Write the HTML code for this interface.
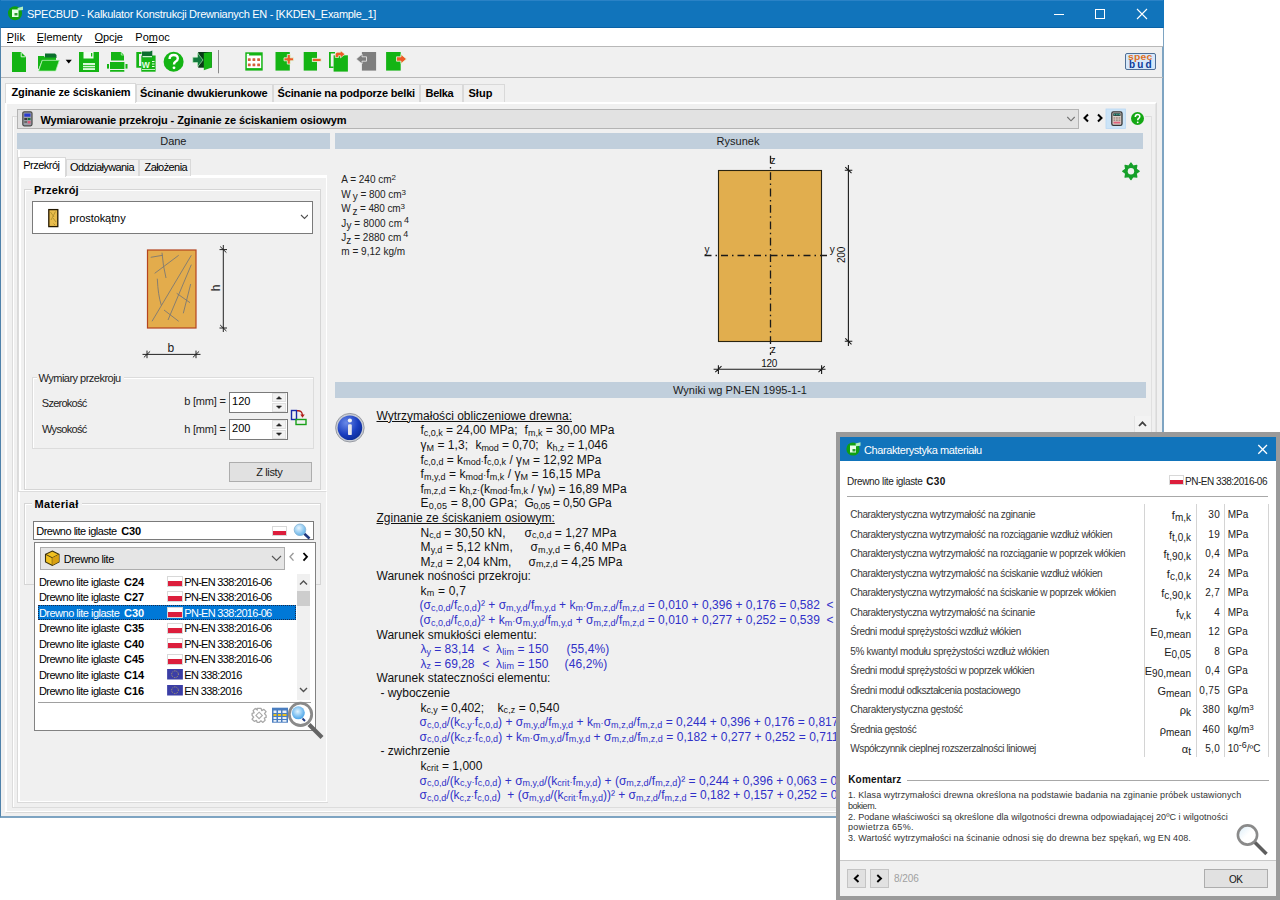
<!DOCTYPE html><html><head><meta charset="utf-8"><style>html,body{margin:0;padding:0;width:1280px;height:900px;overflow:hidden;background:#fff;position:relative;font-family:"Liberation Sans", sans-serif;}sub,sup{line-height:0;}</style></head><body><div style="position:absolute;left:0px;top:0px;width:1164px;height:818px;box-sizing:border-box;border:1px solid #4f82ab;border-right:2px solid #7ea4c2;border-bottom:2px solid #7ea4c2;background:#f0f0f0;"></div>
<div style="position:absolute;left:0px;top:0px;width:1164px;height:28px;background:#1174bb;"></div>
<div style="position:absolute;left:1px;top:0px;width:1162px;height:1px;background:#2a82c6;"></div>
<div style="position:absolute;left:1px;top:27px;width:1162px;height:1px;background:#0a62a6;"></div>
<svg style="position:absolute;left:6px;top:4px" width="20" height="20" viewBox="0 0 20 20"><circle cx="9" cy="9.3" r="7" fill="#10a010"/><rect x="6" y="5.5" width="6.5" height="7.5" fill="#e8ffe8"/><rect x="8.5" y="9" width="3" height="2.5" fill="#30a030"/><path d="M11.5 4 L17 2.5 L17 6 L12 6.5 Z" fill="#b0f0c0"/></svg>
<span style="letter-spacing:-0.293px;position:absolute;top:9px;font-size:11px;line-height:11px;font-weight:400;color:#fff;white-space:pre;left:27.0px;">SPECBUD - Kalkulator Konstrukcji Drewnianych EN - [KKDEN_Example_1]</span>
<div style="position:absolute;left:1054px;top:14px;width:10px;height:1px;background:#fff;"></div>
<div style="position:absolute;left:1095px;top:9px;width:10px;height:10px;box-sizing:border-box;border:1px solid #fff;"></div>
<svg style="position:absolute;left:1136px;top:8px" width="12" height="12" viewBox="0 0 12 12"><path d="M1 1 L11 11 M11 1 L1 11" stroke="#fff" stroke-width="1.1"/></svg>
<div style="position:absolute;left:1px;top:28px;width:1162px;height:18px;background:#fff;"></div>
<div style="position:absolute;left:1px;top:46px;width:1162px;height:1px;background:#b8b8b8;"></div>
<span style="letter-spacing:0.141px;position:absolute;top:32px;font-size:11px;line-height:11px;font-weight:400;color:#000;white-space:pre;left:6.8px;">Plik</span>
<div style="position:absolute;left:7px;top:42px;width:6px;height:1px;background:#000;"></div>
<span style="letter-spacing:-0.070px;position:absolute;top:32px;font-size:11px;line-height:11px;font-weight:400;color:#000;white-space:pre;left:36.8px;">Elementy</span>
<div style="position:absolute;left:37px;top:42px;width:6px;height:1px;background:#000;"></div>
<span style="letter-spacing:-0.070px;position:absolute;top:32px;font-size:11px;line-height:11px;font-weight:400;color:#000;white-space:pre;left:94.5px;">Opcje</span>
<div style="position:absolute;left:95px;top:42px;width:8px;height:1px;background:#000;"></div>
<span style="letter-spacing:0.110px;position:absolute;top:32px;font-size:11px;line-height:11px;font-weight:400;color:#000;white-space:pre;left:135.2px;">Pomoc</span>
<div style="position:absolute;left:148px;top:42px;width:9px;height:1px;background:#000;"></div>
<div style="position:absolute;left:1px;top:77px;width:1162px;height:1px;background:#b8b8b8;"></div>
<svg style="position:absolute;left:0;top:0" width="420" height="80" viewBox="0 0 420 80"><path d="M12 52 H21 L26 57 V72 H12 Z" fill="#14b414"/><path d="M21.2 52.5 V56.8 H25.5" fill="none" stroke="#e8ffe8" stroke-width="0.9"/><path d="M45 53.5 H55 L56.5 55 V58 H45 Z" fill="#0b6e2e"/><path d="M38 56 H44 L45 57.5 H56 V60 H42 L38.5 69 H38 Z" fill="#14b414"/><path d="M42.3 60.3 H59.3 L55.7 71 H38.6 Z" fill="#14b414" stroke="#aef5ae" stroke-width="0.7"/><path d="M65.7 59.8 H71.8 L68.75 63.6 Z" fill="#000"/><path d="M79 52 H99 V72 H79 Z" fill="#14b414"/><rect x="83.5" y="52" width="10" height="6.5" fill="#f0fff0"/><rect x="91" y="53" width="1.3" height="3.5" fill="#14b414"/><rect x="83" y="63" width="12" height="7" fill="#d8f8d8"/><rect x="83" y="65" width="12" height="0.8" fill="#14b414"/><rect x="83" y="67.3" width="12" height="0.8" fill="#14b414"/><path d="M111 52 H121 L124 55 V60.5 H111 Z" fill="#14b414"/><path d="M121.3 52.3 V55 H124" fill="none" stroke="#d8ffd8" stroke-width="0.7"/><rect x="110" y="62" width="14.4" height="7" fill="#14b414"/><rect x="107" y="64" width="2" height="4.6" fill="#14b414"/><rect x="125.5" y="64" width="2" height="4.6" fill="#14b414"/><rect x="110" y="70" width="14.4" height="1.8" rx="0.6" fill="#14b414"/><path d="M136.3 52 H141.5 V54 H139 V66 H141.5 V67.8 H136.3 Z" fill="#14b414"/><rect x="141.3" y="55.5" width="14.3" height="16.2" fill="#14b414"/><path d="M142 51.5 H150 L152.3 50.6 V57.5 H142 Z" fill="#0b6e2e"/><path d="M142.5 56 H152 V57.3 H142.5 Z" fill="#c8f8c8"/><text x="141.8" y="67.8" font-family="Liberation Sans" font-weight="700" font-size="8.5" fill="#e8ffe8">W</text><rect x="152" y="61" width="2.5" height="1" fill="#e8ffe8"/><rect x="152" y="63.5" width="2.5" height="1" fill="#e8ffe8"/><rect x="152" y="66" width="2.5" height="1" fill="#e8ffe8"/><rect x="142" y="69" width="13" height="0.8" fill="#e8ffe8"/><circle cx="173.6" cy="61.7" r="10" fill="#14b414"/><path d="M169.6 59 Q169.6 55 173.7 55 Q177.8 55 177.8 58.6 Q177.8 60.6 175.4 61.8 Q174 62.6 174 64.6" fill="none" stroke="#fff" stroke-width="2.4"/><circle cx="174" cy="67.8" r="1.4" fill="#fff"/><rect x="198.2" y="52" width="13.6" height="15.7" fill="#083c16"/><path d="M203.8 53 L211.8 52 V67.5 L203.8 70.3 Z" fill="#14b414"/><path d="M192.8 57.2 H197.5 V52.8 L203 60 L197.5 67 V62.6 H192.8 Z" fill="#127a3c" stroke="#c8f8c8" stroke-width="0.6"/><rect x="218" y="50" width="1" height="23.3" fill="#8a8a8a"/><rect x="245.3" y="52.3" width="17.4" height="18.3" fill="#14b414"/><rect x="246.8" y="55.5" width="14.4" height="12.6" fill="#fff"/><rect x="246.8" y="53.8" width="2.3" height="2" fill="#fff"/><rect x="247.9" y="58.2" width="2.8" height="2.8" rx="0.5" fill="#d4603c"/><rect x="247.9" y="63.50000000000001" width="2.8" height="2.8" rx="0.5" fill="#d4603c"/><rect x="252.5" y="58.2" width="2.8" height="2.8" rx="0.5" fill="#d4603c"/><rect x="252.5" y="63.50000000000001" width="2.8" height="2.8" rx="0.5" fill="#d4603c"/><rect x="257.20000000000005" y="58.2" width="2.8" height="2.8" rx="0.5" fill="#d4603c"/><rect x="257.20000000000005" y="63.50000000000001" width="2.8" height="2.8" rx="0.5" fill="#d4603c"/><rect x="275.5" y="52" width="14.3" height="18.6" fill="#14b414"/><path d="M287.3 54.5 h3 v3.3 h3.3 v3 h-3.3 v3.3 h-3 v-3.3 h-3.3 v-3 h3.3 Z" fill="#ee5a28" stroke="#e0ffe0" stroke-width="0.8"/><rect x="303.7" y="52" width="13.3" height="18.6" fill="#14b414"/><rect x="312.3" y="58.3" width="8.8" height="3.2" fill="#ee5a28" stroke="#e0ffe0" stroke-width="0.8"/><path d="M329 52 H335 V53.5 H330.8 V66.5 H333.5 V68 H329 Z" fill="#14b414"/><rect x="333.6" y="55.3" width="14.3" height="16.3" fill="#14b414"/><path d="M335.3 57.5 V54.3 Q335.3 52.2 337.5 52.2 H340.5 V50.5 L345 54.2 L340.5 57.9 V55.7 H338.6 V57.5 Z" fill="#ee5a28" stroke="#e0ffe0" stroke-width="0.7"/><rect x="361.9" y="52" width="14.2" height="18.6" fill="#7e7e7e"/><path d="M366.5 56.8 H362 V54 L356.2 59 L362 64 V61.2 H366.5 Z" fill="#7e7e7e" stroke="#f0f0f0" stroke-width="0.8"/><rect x="386.1" y="52" width="14.6" height="18.6" fill="#14b414"/><path d="M396.5 56.8 H401 V54.3 L406.5 59 L401 63.7 V61.2 H396.5 Z" fill="#ee5a28" stroke="#e0ffe0" stroke-width="0.8"/></svg>
<div style="position:absolute;left:1125px;top:53px;width:31px;height:17px;box-sizing:border-box;border:1px solid #4f6f96;border-radius:2px;background:#d6e8fa;overflow:hidden"><div style="position:absolute;left:2px;top:-1px;font-size:9px;line-height:9px;font-weight:700;color:#e0701e;letter-spacing:0.2px;transform:scaleX(1.15);transform-origin:0 0;font-family:'Liberation Sans'">spec</div><div style="position:absolute;left:3px;top:5.5px;font-size:10px;line-height:10px;font-weight:700;color:#0a3a98;letter-spacing:2.2px;font-family:'Liberation Sans'">bud</div></div>
<div style="position:absolute;left:5px;top:102px;width:1152px;height:711px;box-sizing:border-box;border:1px solid #d9d9d9;border-top-color:#fff;border-left-color:#fff;background:#f0f0f0;"></div>
<div style="position:absolute;left:6px;top:103px;width:1150px;height:709px;box-sizing:border-box;border:1px solid #fff;border-right-color:#e3e3e3;"></div>
<div style="position:absolute;left:136px;top:84px;width:137px;height:18px;box-sizing:border-box;border:1px solid #d9d9d9;border-bottom:none;background:#f0f0f0;"></div>
<div style="position:absolute;left:273px;top:84px;width:147px;height:18px;box-sizing:border-box;border:1px solid #d9d9d9;border-bottom:none;background:#f0f0f0;"></div>
<div style="position:absolute;left:420px;top:84px;width:43px;height:18px;box-sizing:border-box;border:1px solid #d9d9d9;border-bottom:none;background:#f0f0f0;"></div>
<div style="position:absolute;left:463px;top:84px;width:42px;height:18px;box-sizing:border-box;border:1px solid #d9d9d9;border-bottom:none;background:#f0f0f0;"></div>
<div style="position:absolute;left:5px;top:83px;width:131px;height:20px;box-sizing:border-box;border:1px solid #d9d9d9;border-bottom:none;background:#fff;"></div>
<span style="letter-spacing:-0.149px;position:absolute;top:87px;font-size:11px;line-height:11px;font-weight:700;color:#000;white-space:pre;left:11.5px;">Zginanie ze ściskaniem</span>
<span style="letter-spacing:-0.160px;position:absolute;top:87.5px;font-size:11px;line-height:11px;font-weight:700;color:#000;white-space:pre;left:140.1px;">Ścinanie dwukierunkowe</span>
<span style="letter-spacing:-0.170px;position:absolute;top:87.5px;font-size:11px;line-height:11px;font-weight:700;color:#000;white-space:pre;left:277.6px;">Ścinanie na podporze belki</span>
<span style="letter-spacing:-0.312px;position:absolute;top:87.5px;font-size:11px;line-height:11px;font-weight:700;color:#000;white-space:pre;left:425.5px;">Belka</span>
<span style="letter-spacing:0.014px;position:absolute;top:87.5px;font-size:11px;line-height:11px;font-weight:700;color:#000;white-space:pre;left:468.5px;">Słup</span>
<div style="position:absolute;left:12px;top:116px;width:1140px;height:692px;box-sizing:border-box;border:1px solid #dcdcdc;border-top:none;"></div>
<div style="position:absolute;left:12px;top:116px;width:5px;height:1px;background:#dcdcdc;"></div>
<div style="position:absolute;left:1145px;top:116px;width:7px;height:1px;background:#dcdcdc;"></div>
<div style="position:absolute;left:13px;top:117px;width:1138px;height:690px;box-sizing:border-box;border:1px solid #fff;border-right:none;border-bottom:none;border-top:none;"></div>
<div style="position:absolute;left:17px;top:109px;width:1062px;height:20px;box-sizing:border-box;border:1px solid #b4b4b4;background:#e2e2e2;"></div>
<span style="letter-spacing:-0.101px;position:absolute;top:115px;font-size:11px;line-height:11px;font-weight:700;color:#000;white-space:pre;left:40.5px;">Wymiarowanie przekroju - Zginanie ze ściskaniem osiowym</span>
<svg style="position:absolute;left:22px;top:111px" width="12" height="16" viewBox="0 0 12 16"><rect x="0.8" y="0.8" width="9.2" height="14" rx="1.5" fill="#9aa0a8" stroke="#4a4a4a" stroke-width="1.2"/><rect x="2.3" y="2.5" width="6.2" height="3.2" fill="#2a3ad0"/><rect x="2.3" y="7" width="2.8" height="2" fill="#3a3a3a"/><rect x="5.7" y="7" width="2.8" height="2" fill="#1a6a3a"/><rect x="2.3" y="10" width="2.8" height="2" fill="#6a6a6a"/><rect x="5.7" y="10" width="2.8" height="2.5" fill="#e05a7a"/></svg>
<svg style="position:absolute;left:1066px;top:114px" width="12" height="10" viewBox="0 0 12 10"><path d="M1.3 3 L5 6.8 L8.7 3" fill="none" stroke="#707070" stroke-width="1.1"/></svg>
<svg style="position:absolute;left:1080px;top:108px" width="70" height="22" viewBox="1080 108 70 22"><path d="M1088 114.5 L1084.5 118 L1088 121.5" fill="none" stroke="#000" stroke-width="2"/><path d="M1098 114.5 L1101.5 118 L1098 121.5" fill="none" stroke="#000" stroke-width="2"/><rect x="1106" y="109" width="19.5" height="19.5" fill="#cce4f7" stroke="#b8d8f4" stroke-width="0.8"/><rect x="1111.8" y="111.8" width="10.2" height="13.6" rx="1.6" fill="#d9cfc8" stroke="#353535" stroke-width="1.3"/><rect x="1113.3" y="113.3" width="7.2" height="2.6" fill="#1a2a28"/><rect x="1113.8" y="113.7" width="1.6" height="1.6" fill="#3aa090"/><rect x="1116.1" y="113.7" width="1.6" height="1.6" fill="#3aa090"/><rect x="1118.4" y="113.7" width="1.6" height="1.6" fill="#3aa090"/><g fill="#9a8078"><rect x="1113.5" y="117.3" width="1.8" height="1.3"/><rect x="1116" y="117.3" width="1.8" height="1.3"/><rect x="1118.5" y="117.3" width="1.8" height="1.3"/><rect x="1113.5" y="119.5" width="1.8" height="1.3"/><rect x="1116" y="119.5" width="1.8" height="1.3"/><rect x="1118.5" y="119.5" width="1.8" height="1.3"/></g><rect x="1113.5" y="121.7" width="6.8" height="1.8" fill="#e0607a"/><circle cx="1137.5" cy="118.5" r="6.5" fill="#14a814"/><path d="M1135.3 117 Q1135.3 114.6 1137.6 114.6 Q1139.8 114.6 1139.8 116.6 Q1139.8 117.8 1138.5 118.5 Q1137.7 119 1137.7 120.3" fill="none" stroke="#fff" stroke-width="1.5"/><circle cx="1137.7" cy="122.3" r="0.9" fill="#fff"/></svg>
<div style="position:absolute;left:17px;top:133px;width:313px;height:16px;background:#c1cfdc;"></div>
<span style="letter-spacing:0.001px;position:absolute;top:136px;font-size:11px;line-height:11px;font-weight:400;color:#1a1a1a;white-space:pre;left:160.2px;">Dane</span>
<div style="position:absolute;left:17px;top:175px;width:311px;height:628px;box-sizing:border-box;border:1px solid #dadada;border-top:none;border-right:none;"></div>
<div style="position:absolute;left:18px;top:176px;width:309px;height:626px;box-sizing:border-box;border:2px solid #fff;border-right:1px solid #fff;border-bottom:1px solid #fff;border-top:none;"></div>
<div style="position:absolute;left:18px;top:175px;width:309px;height:317px;box-sizing:border-box;border:1px solid #dcdcdc;border-top-color:#fff;border-right-color:#fff;background:#f0f0f0;"></div>
<div style="position:absolute;left:19px;top:176px;width:307px;height:315px;box-sizing:border-box;border:2px solid #fff;border-right:none;border-bottom:1px solid #fff;"></div>
<div style="position:absolute;left:66px;top:159px;width:73px;height:17px;box-sizing:border-box;border:1px solid #d9d9d9;border-bottom:none;background:#f0f0f0;"></div>
<div style="position:absolute;left:139px;top:159px;width:52px;height:17px;box-sizing:border-box;border:1px solid #d9d9d9;border-bottom:none;background:#f0f0f0;"></div>
<div style="position:absolute;left:18px;top:157px;width:48px;height:20px;box-sizing:border-box;border:1px solid #d9d9d9;border-bottom:none;background:#fff;"></div>
<span style="letter-spacing:-0.505px;position:absolute;top:159.6px;font-size:11px;line-height:11px;font-weight:400;color:#000;white-space:pre;left:23.2px;">Przekrój</span>
<span style="letter-spacing:-0.588px;position:absolute;top:161.5px;font-size:11px;line-height:11px;font-weight:400;color:#000;white-space:pre;left:70.1px;">Oddziaływania</span>
<span style="letter-spacing:-0.567px;position:absolute;top:161.5px;font-size:11px;line-height:11px;font-weight:400;color:#000;white-space:pre;left:144.5px;">Założenia</span>
<div style="position:absolute;left:24px;top:189px;width:297px;height:301px;box-sizing:border-box;border:1px solid #d5d5d5;"></div>
<div style="position:absolute;left:25px;top:190px;width:295px;height:299px;box-sizing:border-box;border:1px solid #fff;border-right:none;border-bottom:none;"></div>
<div style="position:absolute;left:32px;top:183px;width:48px;height:12px;background:#f0f0f0;"></div>
<span style="letter-spacing:0.172px;position:absolute;top:185px;font-size:11px;line-height:11px;font-weight:700;color:#000;white-space:pre;left:34.0px;">Przekrój</span>
<div style="position:absolute;left:32px;top:201px;width:281px;height:33px;box-sizing:border-box;border:1px solid #7a7a7a;background:#fff;"></div>
<svg style="position:absolute;left:47px;top:208px" width="13" height="20" viewBox="0 0 13 20"><rect x="1.8" y="1.6" width="9" height="17" fill="#e8bc4c" stroke="#241800" stroke-width="1.3"/><path d="M3.5 4 L7 9 M8.5 3.5 L4 12 M6 10 L9 14 M6.5 15.5 L8 17" stroke="#a88a28" stroke-width="0.8" fill="none"/></svg>
<span style="letter-spacing:-0.080px;position:absolute;top:213px;font-size:11px;line-height:11px;font-weight:400;color:#000;white-space:pre;left:69.6px;">prostokątny</span>
<svg style="position:absolute;left:296px;top:211px" width="12" height="10" viewBox="0 0 12 10"><path d="M5 4 L8.5 7.5 L12 4" fill="none" stroke="#505050" stroke-width="1.1"/></svg>
<svg style="position:absolute;left:140px;top:240px" width="100" height="125" viewBox="140 240 100 125"><rect x="147.5" y="250" width="48.5" height="78" fill="#e3ac4c" stroke="#b4441e" stroke-width="1.2"/><g stroke="#767676" stroke-width="0.85" fill="none"><path d="M150.7 257.3 L162.7 255.3"/><path d="M162 252.7 Q163 266 166 278"/><path d="M154.7 273.3 L178.7 255.3"/><path d="M157.3 278.7 Q158 295 161.3 305.3"/><path d="M152 321.3 L191.3 255.3"/><path d="M168 320 L191.3 264.7"/><path d="M164 310 L178.7 321.3"/><path d="M176.7 293.3 L190 302.7"/><path d="M183.3 313.3 L190.7 284"/></g><g stroke="#222" stroke-width="1" fill="none"><path d="M223.3 245 V332"/><path d="M219.5 249.6 H227 M220.2 246.6 L226.4 252.6 M219.5 328 H227 M220.2 325 L226.4 331"/><path d="M142.5 354.4 H200.5"/><path d="M147 350.6 V358.2 M143.9 357.4 L150.1 351.4 M196 350.6 V358.2 M192.9 357.4 L199.1 351.4"/></g></svg>
<span style="position:absolute;top:341.5px;font-size:12px;line-height:12px;font-weight:400;color:#222;white-space:pre;left:167.5px;">b</span>
<div style="position:absolute;left:209px;top:282px;width:14px;height:12px;transform:rotate(-90deg);font-size:12px;line-height:12px;color:#222;text-align:center">h</div>
<div style="position:absolute;left:32px;top:377px;width:282px;height:72px;box-sizing:border-box;border:1px solid #dcdcdc;"></div>
<div style="position:absolute;left:33px;top:378px;width:280px;height:70px;box-sizing:border-box;border:1px solid #fff;border-right:none;border-bottom:none;"></div>
<div style="position:absolute;left:37px;top:372px;width:87px;height:10px;background:#f0f0f0;"></div>
<span style="letter-spacing:-0.517px;position:absolute;top:372.5px;font-size:11px;line-height:11px;font-weight:400;color:#222;white-space:pre;left:38.5px;">Wymiary przekroju</span>
<span style="letter-spacing:-0.740px;position:absolute;top:397.6px;font-size:11px;line-height:11px;font-weight:400;color:#222;white-space:pre;left:41.8px;">Szerokość</span>
<span style="letter-spacing:-0.691px;position:absolute;top:423.7px;font-size:11px;line-height:11px;font-weight:400;color:#222;white-space:pre;left:42.0px;">Wysokość</span>
<span style="letter-spacing:-0.224px;position:absolute;top:396.2px;font-size:11px;line-height:11px;font-weight:400;color:#222;white-space:pre;left:184.3px;">b [mm] =</span>
<span style="letter-spacing:-0.224px;position:absolute;top:423.8px;font-size:11px;line-height:11px;font-weight:400;color:#222;white-space:pre;left:184.3px;">h [mm] =</span>
<div style="position:absolute;left:229px;top:392px;width:59px;height:21px;box-sizing:border-box;border:1px solid #7a7a7a;background:#fff;"></div>
<div style="position:absolute;left:272px;top:393px;width:14px;height:9px;box-sizing:border-box;border:1px solid #e0e0e0;background:#f2f2f2;"></div>
<div style="position:absolute;left:272px;top:403px;width:14px;height:9px;box-sizing:border-box;border:1px solid #e0e0e0;background:#f2f2f2;"></div>
<svg style="position:absolute;left:272px;top:392px" width="14" height="21" viewBox="0 0 14 21"><path d="M4.5 7 L7 4.5 L9.5 7 Z M4.5 14 L7 16.5 L9.5 14 Z" fill="#222" stroke="#222" stroke-width="0.6"/></svg>
<span style="letter-spacing:0.047px;position:absolute;top:396.3px;font-size:11px;line-height:11px;font-weight:400;color:#000;white-space:pre;left:232.0px;">120</span>
<div style="position:absolute;left:229px;top:419px;width:59px;height:21px;box-sizing:border-box;border:1px solid #7a7a7a;background:#fff;"></div>
<div style="position:absolute;left:272px;top:420px;width:14px;height:9px;box-sizing:border-box;border:1px solid #e0e0e0;background:#f2f2f2;"></div>
<div style="position:absolute;left:272px;top:430px;width:14px;height:9px;box-sizing:border-box;border:1px solid #e0e0e0;background:#f2f2f2;"></div>
<svg style="position:absolute;left:272px;top:419px" width="14" height="21" viewBox="0 0 14 21"><path d="M4.5 7 L7 4.5 L9.5 7 Z M4.5 14 L7 16.5 L9.5 14 Z" fill="#222" stroke="#222" stroke-width="0.6"/></svg>
<span style="letter-spacing:0.047px;position:absolute;top:423.3px;font-size:11px;line-height:11px;font-weight:400;color:#000;white-space:pre;left:232.0px;">200</span>
<svg style="position:absolute;left:290px;top:409px" width="19" height="18" viewBox="0 0 19 18"><rect x="1.5" y="1.5" width="5" height="9" fill="none" stroke="#1a2aa8" stroke-width="1.4"/><rect x="6" y="10.5" width="10" height="5" fill="none" stroke="#18a018" stroke-width="1.4"/><path d="M7 1.8 Q12 1 12.5 6.5" fill="none" stroke="#b0201a" stroke-width="1.4"/><path d="M10.3 5.5 L12.5 8.8 L14.7 5.5 Z" fill="#b0201a"/></svg>
<div style="position:absolute;left:229px;top:462px;width:83px;height:20px;box-sizing:border-box;border:1px solid #adadad;background:#e1e1e1;"></div>
<span style="letter-spacing:-0.348px;position:absolute;top:467px;font-size:11px;line-height:11px;font-weight:400;color:#222;white-space:pre;left:256.2px;">Z listy</span>
<div style="position:absolute;left:17px;top:150px;width:1px;height:25px;background:#dadada;"></div>
<div style="position:absolute;left:18px;top:150px;width:2px;height:7px;background:#fff;"></div>
<div style="position:absolute;left:24px;top:503px;width:297px;height:82px;box-sizing:border-box;border:1px solid #d5d5d5;"></div>
<div style="position:absolute;left:25px;top:504px;width:295px;height:80px;box-sizing:border-box;border:1px solid #fff;border-right:none;border-bottom:none;"></div>
<div style="position:absolute;left:32px;top:497px;width:50px;height:12px;background:#f0f0f0;"></div>
<span style="letter-spacing:0.303px;position:absolute;top:498.6px;font-size:11px;line-height:11px;font-weight:700;color:#000;white-space:pre;left:34.5px;">Materiał</span>
<div style="position:absolute;left:33px;top:521px;width:281px;height:19px;box-sizing:border-box;border:1px solid #7a7a7a;background:#fff;"></div>
<span style="letter-spacing:-0.499px;position:absolute;top:525.5px;font-size:11px;line-height:11px;font-weight:400;color:#000;white-space:pre;left:36.2px;">Drewno lite iglaste</span>
<span style="letter-spacing:-0.163px;position:absolute;top:525.5px;font-size:11px;line-height:11px;font-weight:700;color:#000;white-space:pre;left:121.2px;">C30</span>
<div style="position:absolute;left:271.5px;top:525.5px;width:15.5px;height:10px;box-sizing:border-box;border:1px solid #d8d8d8;background:linear-gradient(#fff 0,#fff 45%,#dc1e3c 45%,#dc1e3c 100%)"></div>
<svg style="position:absolute;left:292px;top:523px" width="20" height="17" viewBox="0 0 20 17"><defs><radialGradient id="mg1" cx="0.4" cy="0.35" r="0.7"><stop offset="0" stop-color="#e8f6ff"/><stop offset="1" stop-color="#5aaee8"/></radialGradient></defs><path d="M11.5 10 L17.5 15.5" stroke="#203a80" stroke-width="2.6"/><circle cx="8" cy="6.8" r="5.8" fill="url(#mg1)" stroke="#8ab8d8" stroke-width="0.9"/></svg>
<div style="position:absolute;left:34px;top:542px;width:282px;height:189px;box-sizing:border-box;border:1px solid #828282;background:#fff;"></div>
<div style="position:absolute;left:40px;top:547px;width:245px;height:23px;box-sizing:border-box;border:1px solid #adadad;background:#e5e5e5;"></div>
<svg style="position:absolute;left:44px;top:550px" width="17" height="17" viewBox="0 0 17 17"><path d="M8.3 1 L15 4.3 V12 L8.3 15.5 L1.5 12 V4.3 Z" fill="#f0c020" stroke="#3a3010" stroke-width="1.1"/><path d="M1.8 4.4 L8.3 7.8 L14.8 4.4 M8.3 7.8 V15.2" fill="none" stroke="#3a3010" stroke-width="0.9"/><path d="M8.3 8 L14.8 4.6 V11.8 L8.3 15.2 Z" fill="#d8a010"/></svg>
<span style="letter-spacing:-0.457px;position:absolute;top:553.7px;font-size:11px;line-height:11px;font-weight:400;color:#000;white-space:pre;left:63.8px;">Drewno lite</span>
<svg style="position:absolute;left:270px;top:553px" width="14" height="10" viewBox="0 0 14 10"><path d="M2 3 L6.5 7.5 L11 3" fill="none" stroke="#555" stroke-width="1.1"/></svg>
<svg style="position:absolute;left:286px;top:550px" width="26" height="14" viewBox="0 0 26 14"><path d="M7.5 3 L4 6.8 L7.5 10.6" fill="none" stroke="#9a9a9a" stroke-width="1.4"/><path d="M17.5 3 L21 6.8 L17.5 10.6" fill="none" stroke="#000" stroke-width="1.8"/></svg>
<div style="position:absolute;left:297px;top:574px;width:13px;height:126px;background:#f0f0f0;"></div>
<div style="position:absolute;left:297px;top:591px;width:13px;height:15px;background:#cdcdcd;"></div>
<svg style="position:absolute;left:297px;top:574px" width="13" height="126" viewBox="0 0 13 126"><path d="M3 10.5 L6.5 7 L10 10.5" fill="none" stroke="#505050" stroke-width="1.4"/><path d="M3 114 L6.5 117.5 L10 114" fill="none" stroke="#505050" stroke-width="1.4"/></svg>
<span style="letter-spacing:-0.499px;position:absolute;top:576.5px;font-size:11px;line-height:11px;font-weight:400;color:#000;white-space:pre;left:38.9px;">Drewno lite iglaste</span>
<span style="letter-spacing:-0.129px;position:absolute;top:576.5px;font-size:11px;line-height:11px;font-weight:700;color:#000;white-space:pre;left:124.1px;">C24</span>
<div style="position:absolute;left:166.5px;top:576px;width:16px;height:10.5px;box-sizing:border-box;border:1px solid #d8d8d8;background:linear-gradient(#fff 0,#fff 45%,#dc1e3c 45%,#dc1e3c 100%)"></div>
<span style="letter-spacing:-0.695px;position:absolute;top:576.5px;font-size:11px;line-height:11px;font-weight:400;color:#000;white-space:pre;left:184.25px;">PN-EN 338:2016-06</span>
<span style="letter-spacing:-0.499px;position:absolute;top:592.0px;font-size:11px;line-height:11px;font-weight:400;color:#000;white-space:pre;left:38.9px;">Drewno lite iglaste</span>
<span style="letter-spacing:-0.129px;position:absolute;top:592.0px;font-size:11px;line-height:11px;font-weight:700;color:#000;white-space:pre;left:124.1px;">C27</span>
<div style="position:absolute;left:166.5px;top:591px;width:16px;height:10.5px;box-sizing:border-box;border:1px solid #d8d8d8;background:linear-gradient(#fff 0,#fff 45%,#dc1e3c 45%,#dc1e3c 100%)"></div>
<span style="letter-spacing:-0.695px;position:absolute;top:592.0px;font-size:11px;line-height:11px;font-weight:400;color:#000;white-space:pre;left:184.25px;">PN-EN 338:2016-06</span>
<div style="position:absolute;left:38px;top:605px;width:258px;height:15px;box-sizing:border-box;background:#0078d7;border:1px dotted #1a2a4a;"></div>
<span style="letter-spacing:-0.499px;position:absolute;top:607.5px;font-size:11px;line-height:11px;font-weight:400;color:#fff;white-space:pre;left:38.9px;">Drewno lite iglaste</span>
<span style="letter-spacing:-0.129px;position:absolute;top:607.5px;font-size:11px;line-height:11px;font-weight:700;color:#fff;white-space:pre;left:124.1px;">C30</span>
<div style="position:absolute;left:166.5px;top:607px;width:16px;height:10.5px;box-sizing:border-box;border:1px solid #d8d8d8;background:linear-gradient(#fff 0,#fff 45%,#dc1e3c 45%,#dc1e3c 100%)"></div>
<span style="letter-spacing:-0.695px;position:absolute;top:607.5px;font-size:11px;line-height:11px;font-weight:400;color:#fff;white-space:pre;left:184.25px;">PN-EN 338:2016-06</span>
<span style="letter-spacing:-0.499px;position:absolute;top:623.0px;font-size:11px;line-height:11px;font-weight:400;color:#000;white-space:pre;left:38.9px;">Drewno lite iglaste</span>
<span style="letter-spacing:-0.129px;position:absolute;top:623.0px;font-size:11px;line-height:11px;font-weight:700;color:#000;white-space:pre;left:124.1px;">C35</span>
<div style="position:absolute;left:166.5px;top:623px;width:16px;height:10.5px;box-sizing:border-box;border:1px solid #d8d8d8;background:linear-gradient(#fff 0,#fff 45%,#dc1e3c 45%,#dc1e3c 100%)"></div>
<span style="letter-spacing:-0.695px;position:absolute;top:623.0px;font-size:11px;line-height:11px;font-weight:400;color:#000;white-space:pre;left:184.25px;">PN-EN 338:2016-06</span>
<span style="letter-spacing:-0.499px;position:absolute;top:638.5px;font-size:11px;line-height:11px;font-weight:400;color:#000;white-space:pre;left:38.9px;">Drewno lite iglaste</span>
<span style="letter-spacing:-0.129px;position:absolute;top:638.5px;font-size:11px;line-height:11px;font-weight:700;color:#000;white-space:pre;left:124.1px;">C40</span>
<div style="position:absolute;left:166.5px;top:638px;width:16px;height:10.5px;box-sizing:border-box;border:1px solid #d8d8d8;background:linear-gradient(#fff 0,#fff 45%,#dc1e3c 45%,#dc1e3c 100%)"></div>
<span style="letter-spacing:-0.695px;position:absolute;top:638.5px;font-size:11px;line-height:11px;font-weight:400;color:#000;white-space:pre;left:184.25px;">PN-EN 338:2016-06</span>
<span style="letter-spacing:-0.499px;position:absolute;top:654.0px;font-size:11px;line-height:11px;font-weight:400;color:#000;white-space:pre;left:38.9px;">Drewno lite iglaste</span>
<span style="letter-spacing:-0.129px;position:absolute;top:654.0px;font-size:11px;line-height:11px;font-weight:700;color:#000;white-space:pre;left:124.1px;">C45</span>
<div style="position:absolute;left:166.5px;top:654px;width:16px;height:10.5px;box-sizing:border-box;border:1px solid #d8d8d8;background:linear-gradient(#fff 0,#fff 45%,#dc1e3c 45%,#dc1e3c 100%)"></div>
<span style="letter-spacing:-0.695px;position:absolute;top:654.0px;font-size:11px;line-height:11px;font-weight:400;color:#000;white-space:pre;left:184.25px;">PN-EN 338:2016-06</span>
<span style="letter-spacing:-0.499px;position:absolute;top:669.5px;font-size:11px;line-height:11px;font-weight:400;color:#000;white-space:pre;left:38.9px;">Drewno lite iglaste</span>
<span style="letter-spacing:-0.129px;position:absolute;top:669.5px;font-size:11px;line-height:11px;font-weight:700;color:#000;white-space:pre;left:124.1px;">C14</span>
<svg style="position:absolute;left:166.5px;top:669px" width="16" height="10.5" viewBox="0 0 15 10"><rect x="0" y="0" width="15" height="10" fill="#3b3ea6"/><circle cx="7.5" cy="5" r="3.2" fill="none" stroke="#d8c848" stroke-width="0.7" stroke-dasharray="0.8 0.9"/></svg>
<span style="letter-spacing:-0.611px;position:absolute;top:669.5px;font-size:11px;line-height:11px;font-weight:400;color:#000;white-space:pre;left:184.25px;">EN 338:2016</span>
<span style="letter-spacing:-0.499px;position:absolute;top:685.5px;font-size:11px;line-height:11px;font-weight:400;color:#000;white-space:pre;left:38.9px;">Drewno lite iglaste</span>
<span style="letter-spacing:-0.129px;position:absolute;top:685.5px;font-size:11px;line-height:11px;font-weight:700;color:#000;white-space:pre;left:124.1px;">C16</span>
<svg style="position:absolute;left:166.5px;top:685px" width="16" height="10.5" viewBox="0 0 15 10"><rect x="0" y="0" width="15" height="10" fill="#3b3ea6"/><circle cx="7.5" cy="5" r="3.2" fill="none" stroke="#d8c848" stroke-width="0.7" stroke-dasharray="0.8 0.9"/></svg>
<span style="letter-spacing:-0.611px;position:absolute;top:685.5px;font-size:11px;line-height:11px;font-weight:400;color:#000;white-space:pre;left:184.25px;">EN 338:2016</span>
<div style="position:absolute;left:35px;top:698px;width:262px;height:4px;background:#fff;"></div>
<div style="position:absolute;left:38px;top:702px;width:273px;height:1px;background:#a0a0a0;"></div>
<svg style="position:absolute;left:250px;top:700px" width="80" height="42" viewBox="250 700 80 42"><g transform="translate(259.1 715.4)"><path d="M-2 -7 H2 L2.6 -4.8 L4.8 -6 L7 -3.8 L5.4 -1.8 L7 0 V2 L5.2 2.6 L6 4.8 L3.8 7 L1.8 5.4 L0 7 H-2 L-2.6 5 L-4.8 6 L-7 3.8 L-5.4 1.8 L-7 0 V-2 L-5 -2.6 L-6 -4.8 L-3.8 -7 L-1.8 -5.4 Z" fill="#fff" stroke="#a8a8a8" stroke-width="1.3" stroke-linejoin="round"/><path d="M0 -3.2 L3.2 0 L0 3.2 L-3.2 0 Z" fill="#fff" stroke="#a8a8a8" stroke-width="1.1"/></g><rect x="272" y="707.7" width="16" height="15" fill="#4a7ec0"/><g fill="#e8f0fa"><rect x="273.5" y="710.5" width="3" height="2.5"/><rect x="278" y="710.5" width="3" height="2.5"/><rect x="282.5" y="710.5" width="4" height="2.5"/><rect x="273.5" y="717" width="3" height="2"/><rect x="278" y="717" width="3" height="2"/><rect x="282.5" y="717" width="4" height="2"/><rect x="273.5" y="720" width="3" height="1.8"/><rect x="278" y="720" width="3" height="1.8"/><rect x="282.5" y="720" width="4" height="1.8"/></g><g fill="#e8c020"><rect x="273.5" y="714" width="3" height="2"/><rect x="278" y="714" width="3" height="2"/><rect x="282.5" y="714" width="4" height="2"/></g><defs><radialGradient id="mg2" cx="0.45" cy="0.4" r="0.6"><stop offset="0" stop-color="#e0f4ff"/><stop offset="1" stop-color="#4aa4e8"/></radialGradient></defs><circle cx="300.5" cy="714.3" r="11.2" fill="#fff" fill-opacity="0.6" stroke="#8a8a8a" stroke-width="2.8"/><circle cx="298.3" cy="712.8" r="6.5" fill="url(#mg2)"/><path d="M302.5 718.5 L305 721" stroke="#203a80" stroke-width="2"/><path d="M309 724.5 L322 737.5" stroke="#646464" stroke-width="4.2"/></svg>
<div style="position:absolute;left:1151px;top:116px;width:1px;height:690px;background:#e0e0e0;"></div>
<div style="position:absolute;left:335px;top:133px;width:808px;height:16px;background:#c1cfdc;"></div>
<span style="letter-spacing:0.029px;position:absolute;top:136px;font-size:11px;line-height:11px;font-weight:400;color:#1a1a1a;white-space:pre;left:716.5px;">Rysunek</span>
<span style="letter-spacing:-0.006px;position:absolute;top:175.1px;font-size:10px;line-height:10px;font-weight:400;color:#222;white-space:pre;left:341.3px;">A = 240 cm<span style="position:relative;top:-3px;font-size:8px">2</span></span>
<span style="letter-spacing:-0.033px;position:absolute;top:189.8px;font-size:10px;line-height:10px;font-weight:400;color:#222;white-space:pre;left:341.3px;">W<span style="position:relative;top:2.5px">&thinsp;y</span> = 800 cm<span style="position:relative;top:-3px;font-size:8px">3</span></span>
<span style="letter-spacing:-0.125px;position:absolute;top:204.4px;font-size:10px;line-height:10px;font-weight:400;color:#222;white-space:pre;left:341.3px;">W<span style="position:relative;top:2.5px">&thinsp;z</span> = 480 cm<span style="position:relative;top:-3px;font-size:8px">3</span></span>
<span style="letter-spacing:0.087px;position:absolute;top:218.5px;font-size:10px;line-height:10px;font-weight:400;color:#222;white-space:pre;left:341.3px;">J<span style="position:relative;top:2.5px">y</span> = 8000 cm<span style="position:relative;top:-4px;font-size:9px">&thinsp;4</span></span>
<span style="letter-spacing:0.030px;position:absolute;top:233.1px;font-size:10px;line-height:10px;font-weight:400;color:#222;white-space:pre;left:341.3px;">J<span style="position:relative;top:2.5px">z</span> = 2880 cm<span style="position:relative;top:-4px;font-size:9px">&thinsp;4</span></span>
<span style="letter-spacing:0.020px;position:absolute;top:247.2px;font-size:10px;line-height:10px;font-weight:400;color:#222;white-space:pre;left:341.3px;">m = 9,12 kg/m</span>
<svg style="position:absolute;left:690px;top:150px" width="180" height="230" viewBox="690 150 180 230"><rect x="718.5" y="170.5" width="103" height="171" fill="#e1ae4e" stroke="#2a2410" stroke-width="1.1"/><g stroke="#1a1a1a" stroke-width="1.1" fill="none"><path d="M770.5 155.8 V355" stroke-dasharray="7.8 3.5 1.5 3.6" stroke-width="1.3"/><path d="M704.5 255.5 H828" stroke-dasharray="7 4 1.5 4" stroke-width="1.3"/><path d="M848.4 165 V346"/><path d="M844.8 170.2 H852.3 M845.3 167.2 L851.5 173.2 M844.8 341.3 H852.3 M845.3 338.3 L851.5 344.3"/><path d="M713.6 369.2 H825.5"/><path d="M718.4 365.3 V373.9 M715.3 372.2 L721.5 366.2 M821.6 365.3 V373.9 M818.5 372.2 L824.7 366.2"/></g></svg>
<span style="position:absolute;top:155.7px;font-size:10px;line-height:10px;font-weight:400;color:#111;white-space:pre;left:770.5px;">z</span>
<span style="position:absolute;top:345px;font-size:10px;line-height:10px;font-weight:400;color:#111;white-space:pre;left:770.7px;">z</span>
<span style="position:absolute;top:245.2px;font-size:10px;line-height:10px;font-weight:400;color:#111;white-space:pre;left:704.5px;">y</span>
<span style="position:absolute;top:245.2px;font-size:10px;line-height:10px;font-weight:400;color:#111;white-space:pre;left:829.8px;">y</span>
<span style="letter-spacing:-0.229px;position:absolute;top:359px;font-size:10px;line-height:10px;font-weight:400;color:#111;white-space:pre;left:761.2px;">120</span>
<div style="position:absolute;left:831px;top:250px;width:22px;height:10px;transform:rotate(-90deg);font-size:10px;line-height:10px;color:#111;text-align:center;letter-spacing:-0.2px">200</div>
<svg style="position:absolute;left:1118px;top:158px" width="26" height="26" viewBox="1118 158 26 26"><polygon points="1130.95,163.10 1133.09,166.13 1136.75,165.50 1136.12,169.16 1139.15,171.30 1136.12,173.44 1136.75,177.10 1133.09,176.47 1130.95,179.50 1128.81,176.47 1125.15,177.10 1125.78,173.44 1122.75,171.30 1125.78,169.16 1125.15,165.50 1128.81,166.13" fill="#16a02a" stroke="#16a02a" stroke-width="1.4" stroke-linejoin="round"/><circle cx="1130.95" cy="171.3" r="3.2" fill="#f0f0f0"/></svg>
<div style="position:absolute;left:335px;top:382px;width:811px;height:16px;background:#c1cfdc;"></div>
<span style="letter-spacing:0.009px;position:absolute;top:385px;font-size:11px;line-height:11px;font-weight:400;color:#1a1a1a;white-space:pre;left:673.0px;">Wyniki wg PN-EN 1995-1-1</span>
<div style="position:absolute;left:1134px;top:416px;width:17px;height:391px;box-sizing:border-box;background:#f3f3f3;border-left:1px solid #e4e4e4;"></div>
<svg style="position:absolute;left:1134px;top:415px" width="17" height="16" viewBox="0 0 17 16"><path d="M5 11 L8.5 7.3 L12 11" fill="none" stroke="#404040" stroke-width="1.8"/></svg>
<svg style="position:absolute;left:333px;top:411px" width="34" height="34" viewBox="0 0 34 34"><defs><radialGradient id="ig" cx="0.35" cy="0.3" r="0.8"><stop offset="0" stop-color="#6a8ae8"/><stop offset="0.6" stop-color="#1a3ec0"/><stop offset="1" stop-color="#0a2a90"/></radialGradient></defs><circle cx="16.9" cy="16.7" r="14.3" fill="#c8ccd4" stroke="#8a8e96" stroke-width="0.8"/><circle cx="16.9" cy="16.7" r="12.3" fill="url(#ig)"/><circle cx="16.9" cy="9.5" r="2.1" fill="#f4f4f4"/><rect x="15" y="13.3" width="3.8" height="10.8" rx="1.2" fill="#e8e8ec"/></svg>
<span style="letter-spacing:0.006px;position:absolute;top:409.5px;font-size:12px;line-height:12px;font-weight:400;color:#111;white-space:pre;left:376.5px;text-decoration:underline;text-underline-offset:1px;">Wytrzymałości obliczeniowe drewna:</span>
<span style="letter-spacing:-0.021px;position:absolute;top:424.0px;font-size:12px;line-height:12px;font-weight:400;color:#111;white-space:pre;left:420.5px;">f<span style="font-size:9px;position:relative;top:1.5px">c,0,k</span> = 24,00 MPa;</span>
<span style="letter-spacing:0.027px;position:absolute;top:424.0px;font-size:12px;line-height:12px;font-weight:400;color:#111;white-space:pre;left:524.5px;">f<span style="font-size:9px;position:relative;top:1.5px">m,k</span> = 30,00 MPa</span>
<span style="letter-spacing:0.033px;position:absolute;top:439.0px;font-size:12px;line-height:12px;font-weight:400;color:#111;white-space:pre;left:420.5px;">γ<span style="font-size:9px;position:relative;top:1.5px">M</span> = 1,3;</span>
<span style="letter-spacing:-0.074px;position:absolute;top:439.0px;font-size:12px;line-height:12px;font-weight:400;color:#111;white-space:pre;left:475.5px;">k<span style="font-size:9px;position:relative;top:1.5px">mod</span> = 0,70;</span>
<span style="letter-spacing:-0.061px;position:absolute;top:439.0px;font-size:12px;line-height:12px;font-weight:400;color:#111;white-space:pre;left:546.5px;">k<span style="font-size:9px;position:relative;top:1.5px">h,z</span> = 1,046</span>
<span style="letter-spacing:0.009px;position:absolute;top:453.5px;font-size:12px;line-height:12px;font-weight:400;color:#111;white-space:pre;left:420.5px;">f<span style="font-size:9px;position:relative;top:1.5px">c,0,d</span> = k<span style="font-size:9px;position:relative;top:1.5px">mod</span><span style="font-size:9px">·</span>f<span style="font-size:9px;position:relative;top:1.5px">c,0,k</span> / γ<span style="font-size:9px;position:relative;top:1.5px">M</span> = 12,92 MPa</span>
<span style="letter-spacing:0.058px;position:absolute;top:468.0px;font-size:12px;line-height:12px;font-weight:400;color:#111;white-space:pre;left:420.5px;">f<span style="font-size:9px;position:relative;top:1.5px">m,y,d</span> = k<span style="font-size:9px;position:relative;top:1.5px">mod</span><span style="font-size:9px">·</span>f<span style="font-size:9px;position:relative;top:1.5px">m,k</span> / γ<span style="font-size:9px;position:relative;top:1.5px">M</span> = 16,15 MPa</span>
<span style="letter-spacing:-0.039px;position:absolute;top:482.5px;font-size:12px;line-height:12px;font-weight:400;color:#111;white-space:pre;left:420.5px;">f<span style="font-size:9px;position:relative;top:1.5px">m,z,d</span> = k<span style="font-size:9px;position:relative;top:1.5px">h,z</span><span style="font-size:9px">·</span>(k<span style="font-size:9px;position:relative;top:1.5px">mod</span><span style="font-size:9px">·</span>f<span style="font-size:9px;position:relative;top:1.5px">m,k</span> / γ<span style="font-size:9px;position:relative;top:1.5px">M</span>) = 16,89 MPa</span>
<span style="letter-spacing:0.220px;position:absolute;top:497.0px;font-size:12px;line-height:12px;font-weight:400;color:#111;white-space:pre;left:420.5px;">E<span style="font-size:9px;position:relative;top:1.5px">0,05</span> = 8,00 GPa;</span>
<span style="letter-spacing:-0.267px;position:absolute;top:497.0px;font-size:12px;line-height:12px;font-weight:400;color:#111;white-space:pre;left:524.5px;">G<span style="font-size:9px;position:relative;top:1.5px">0,05</span> = 0,50 GPa</span>
<span style="letter-spacing:0.007px;position:absolute;top:511.5px;font-size:12px;line-height:12px;font-weight:400;color:#111;white-space:pre;left:376.5px;text-decoration:underline;text-underline-offset:1px;">Zginanie ze ściskaniem osiowym:</span>
<span style="letter-spacing:-0.046px;position:absolute;top:526.5px;font-size:12px;line-height:12px;font-weight:400;color:#111;white-space:pre;left:420.5px;">N<span style="font-size:9px;position:relative;top:1.5px">c,d</span> = 30,50 kN,</span>
<span style="letter-spacing:0.002px;position:absolute;top:526.5px;font-size:12px;line-height:12px;font-weight:400;color:#111;white-space:pre;left:524.5px;">σ<span style="font-size:9px;position:relative;top:1.5px">c,0,d</span> = 1,27 MPa</span>
<span style="letter-spacing:0.174px;position:absolute;top:541.0px;font-size:12px;line-height:12px;font-weight:400;color:#111;white-space:pre;left:420.5px;">M<span style="font-size:9px;position:relative;top:1.5px">y,d</span> = 5,12 kNm,</span>
<span style="letter-spacing:0.130px;position:absolute;top:541.0px;font-size:12px;line-height:12px;font-weight:400;color:#111;white-space:pre;left:530.5px;">σ<span style="font-size:9px;position:relative;top:1.5px">m,y,d</span> = 6,40 MPa</span>
<span style="letter-spacing:0.038px;position:absolute;top:555.5px;font-size:12px;line-height:12px;font-weight:400;color:#111;white-space:pre;left:420.5px;">M<span style="font-size:9px;position:relative;top:1.5px">z,d</span> = 2,04 kNm,</span>
<span style="letter-spacing:-0.028px;position:absolute;top:555.5px;font-size:12px;line-height:12px;font-weight:400;color:#111;white-space:pre;left:528.5px;">σ<span style="font-size:9px;position:relative;top:1.5px">m,z,d</span> = 4,25 MPa</span>
<span style="letter-spacing:0.004px;position:absolute;top:570.0px;font-size:12px;line-height:12px;font-weight:400;color:#111;white-space:pre;left:376.5px;">Warunek nośności przekroju:</span>
<span style="letter-spacing:0.205px;position:absolute;top:584.5px;font-size:12px;line-height:12px;font-weight:400;color:#111;white-space:pre;left:420.5px;">k<span style="font-size:9px;position:relative;top:1.5px">m</span> = 0,7</span>
<span style="letter-spacing:0.019px;position:absolute;top:599.0px;font-size:12px;line-height:12px;font-weight:400;color:#3030c8;white-space:pre;left:419.5px;">(σ<span style="font-size:9px;position:relative;top:1.5px">c,0,d</span>/f<span style="font-size:9px;position:relative;top:1.5px">c,0,d</span>)² + σ<span style="font-size:9px;position:relative;top:1.5px">m,y,d</span>/f<span style="font-size:9px;position:relative;top:1.5px">m,y,d</span> + k<span style="font-size:9px;position:relative;top:1.5px">m</span><span style="font-size:9px">·</span>σ<span style="font-size:9px;position:relative;top:1.5px">m,z,d</span>/f<span style="font-size:9px;position:relative;top:1.5px">m,z,d</span> = 0,010 + 0,396 + 0,176 = 0,582  &lt;</span>
<span style="letter-spacing:0.019px;position:absolute;top:614.0px;font-size:12px;line-height:12px;font-weight:400;color:#3030c8;white-space:pre;left:419.5px;">(σ<span style="font-size:9px;position:relative;top:1.5px">c,0,d</span>/f<span style="font-size:9px;position:relative;top:1.5px">c,0,d</span>)² + k<span style="font-size:9px;position:relative;top:1.5px">m</span><span style="font-size:9px">·</span>σ<span style="font-size:9px;position:relative;top:1.5px">m,y,d</span>/f<span style="font-size:9px;position:relative;top:1.5px">m,y,d</span> + σ<span style="font-size:9px;position:relative;top:1.5px">m,z,d</span>/f<span style="font-size:9px;position:relative;top:1.5px">m,z,d</span> = 0,010 + 0,277 + 0,252 = 0,539  &lt;</span>
<span style="letter-spacing:0.029px;position:absolute;top:628.5px;font-size:12px;line-height:12px;font-weight:400;color:#111;white-space:pre;left:376.5px;">Warunek smukłości elementu:</span>
<span style="letter-spacing:-0.022px;position:absolute;top:643.0px;font-size:12px;line-height:12px;font-weight:400;color:#3030c8;white-space:pre;left:420.5px;">λ<span style="font-size:9px;position:relative;top:1.5px">y</span> = 83,14</span>
<span style="position:absolute;top:643.0px;font-size:12px;line-height:12px;font-weight:400;color:#3030c8;white-space:pre;left:482.5px;">&lt;</span>
<span style="letter-spacing:0.130px;position:absolute;top:643.0px;font-size:12px;line-height:12px;font-weight:400;color:#3030c8;white-space:pre;left:496.0px;">λ<span style="font-size:9px;position:relative;top:1.5px">lim</span> = 150</span>
<span style="letter-spacing:0.138px;position:absolute;top:643.0px;font-size:12px;line-height:12px;font-weight:400;color:#3030c8;white-space:pre;left:566.5px;">(55,4%)</span>
<span style="letter-spacing:-0.022px;position:absolute;top:657.5px;font-size:12px;line-height:12px;font-weight:400;color:#3030c8;white-space:pre;left:420.5px;">λ<span style="font-size:9px;position:relative;top:1.5px">z</span> = 69,28</span>
<span style="position:absolute;top:657.5px;font-size:12px;line-height:12px;font-weight:400;color:#3030c8;white-space:pre;left:482.5px;">&lt;</span>
<span style="letter-spacing:0.130px;position:absolute;top:657.5px;font-size:12px;line-height:12px;font-weight:400;color:#3030c8;white-space:pre;left:496.0px;">λ<span style="font-size:9px;position:relative;top:1.5px">lim</span> = 150</span>
<span style="letter-spacing:0.138px;position:absolute;top:657.5px;font-size:12px;line-height:12px;font-weight:400;color:#3030c8;white-space:pre;left:564.5px;">(46,2%)</span>
<span style="letter-spacing:0.034px;position:absolute;top:672.0px;font-size:12px;line-height:12px;font-weight:400;color:#111;white-space:pre;left:376.5px;">Warunek stateczności elementu:</span>
<span style="letter-spacing:-0.044px;position:absolute;top:687.0px;font-size:12px;line-height:12px;font-weight:400;color:#111;white-space:pre;left:380.5px;">- wyboczenie</span>
<span style="letter-spacing:-0.089px;position:absolute;top:701.5px;font-size:12px;line-height:12px;font-weight:400;color:#111;white-space:pre;left:420.5px;">k<span style="font-size:9px;position:relative;top:1.5px">c,y</span> = 0,402;</span>
<span style="letter-spacing:0.064px;position:absolute;top:701.5px;font-size:12px;line-height:12px;font-weight:400;color:#111;white-space:pre;left:497.5px;">k<span style="font-size:9px;position:relative;top:1.5px">c,z</span> = 0,540</span>
<span style="letter-spacing:0.044px;position:absolute;top:716.0px;font-size:12px;line-height:12px;font-weight:400;color:#3030c8;white-space:pre;left:419.5px;">σ<span style="font-size:9px;position:relative;top:1.5px">c,0,d</span>/(k<span style="font-size:9px;position:relative;top:1.5px">c,y</span><span style="font-size:9px">·</span>f<span style="font-size:9px;position:relative;top:1.5px">c,0,d</span>) + σ<span style="font-size:9px;position:relative;top:1.5px">m,y,d</span>/f<span style="font-size:9px;position:relative;top:1.5px">m,y,d</span> + k<span style="font-size:9px;position:relative;top:1.5px">m</span><span style="font-size:9px">·</span>σ<span style="font-size:9px;position:relative;top:1.5px">m,z,d</span>/f<span style="font-size:9px;position:relative;top:1.5px">m,z,d</span> = 0,244 + 0,396 + 0,176 = 0,817</span>
<span style="letter-spacing:0.054px;position:absolute;top:730.5px;font-size:12px;line-height:12px;font-weight:400;color:#3030c8;white-space:pre;left:419.5px;">σ<span style="font-size:9px;position:relative;top:1.5px">c,0,d</span>/(k<span style="font-size:9px;position:relative;top:1.5px">c,z</span><span style="font-size:9px">·</span>f<span style="font-size:9px;position:relative;top:1.5px">c,0,d</span>) + k<span style="font-size:9px;position:relative;top:1.5px">m</span><span style="font-size:9px">·</span>σ<span style="font-size:9px;position:relative;top:1.5px">m,y,d</span>/f<span style="font-size:9px;position:relative;top:1.5px">m,y,d</span> + σ<span style="font-size:9px;position:relative;top:1.5px">m,z,d</span>/f<span style="font-size:9px;position:relative;top:1.5px">m,z,d</span> = 0,182 + 0,277 + 0,252 = 0,711</span>
<span style="letter-spacing:-0.041px;position:absolute;top:745.0px;font-size:12px;line-height:12px;font-weight:400;color:#111;white-space:pre;left:380.5px;">- zwichrzenie</span>
<span style="letter-spacing:0.022px;position:absolute;top:759.5px;font-size:12px;line-height:12px;font-weight:400;color:#111;white-space:pre;left:420.5px;">k<span style="font-size:9px;position:relative;top:1.5px">crit</span> = 1,000</span>
<span style="letter-spacing:0.014px;position:absolute;top:774.5px;font-size:12px;line-height:12px;font-weight:400;color:#3030c8;white-space:pre;left:419.5px;">σ<span style="font-size:9px;position:relative;top:1.5px">c,0,d</span>/(k<span style="font-size:9px;position:relative;top:1.5px">c,y</span><span style="font-size:9px">·</span>f<span style="font-size:9px;position:relative;top:1.5px">c,0,d</span>) + σ<span style="font-size:9px;position:relative;top:1.5px">m,y,d</span>/(k<span style="font-size:9px;position:relative;top:1.5px">crit</span><span style="font-size:9px">·</span>f<span style="font-size:9px;position:relative;top:1.5px">m,y,d</span>) + (σ<span style="font-size:9px;position:relative;top:1.5px">m,z,d</span>/f<span style="font-size:9px;position:relative;top:1.5px">m,z,d</span>)² = 0,244 + 0,396 + 0,063 = 0,703</span>
<span style="letter-spacing:-0.021px;position:absolute;top:789.0px;font-size:12px;line-height:12px;font-weight:400;color:#3030c8;white-space:pre;left:419.5px;">σ<span style="font-size:9px;position:relative;top:1.5px">c,0,d</span>/(k<span style="font-size:9px;position:relative;top:1.5px">c,z</span><span style="font-size:9px">·</span>f<span style="font-size:9px;position:relative;top:1.5px">c,0,d</span>)  + (σ<span style="font-size:9px;position:relative;top:1.5px">m,y,d</span>/(k<span style="font-size:9px;position:relative;top:1.5px">crit</span><span style="font-size:9px">·</span>f<span style="font-size:9px;position:relative;top:1.5px">m,y,d</span>))² + σ<span style="font-size:9px;position:relative;top:1.5px">m,z,d</span>/f<span style="font-size:9px;position:relative;top:1.5px">m,z,d</span> = 0,182 + 0,157 + 0,252 = 0,591</span>
<div style="position:absolute;left:836px;top:432px;width:444px;height:468px;background:#9a9a9a;"></div>
<div style="position:absolute;left:840px;top:437px;width:436px;height:459px;background:#fff;"></div>
<div style="position:absolute;left:840px;top:437px;width:436px;height:24px;background:#1174bb;"></div>
<svg style="position:absolute;left:845px;top:440px" width="18" height="18" viewBox="0 0 18 18"><circle cx="8" cy="9" r="6.6" fill="#10a010"/><rect x="5" y="5.5" width="6" height="7" fill="#e8ffe8"/><rect x="7.5" y="9" width="3" height="2.5" fill="#30a030"/><path d="M10.5 3.5 L15.5 2.3 L15.5 5.8 L11 6.2 Z" fill="#b0f0c0"/></svg>
<span style="letter-spacing:-0.403px;position:absolute;top:445px;font-size:11px;line-height:11px;font-weight:400;color:#fff;white-space:pre;left:864.0px;">Charakterystyka materiału</span>
<svg style="position:absolute;left:1256px;top:443px" width="14" height="14" viewBox="0 0 14 14"><path d="M2.3 2 L11 10.8 M11 2 L2.3 10.8" stroke="#fff" stroke-width="1.3"/></svg>
<span style="letter-spacing:-0.333px;position:absolute;top:477px;font-size:10px;line-height:10px;font-weight:400;color:#222;white-space:pre;left:847.1px;">Drewno lite iglaste</span>
<span style="letter-spacing:0.414px;position:absolute;top:477px;font-size:10px;line-height:10px;font-weight:700;color:#111;white-space:pre;left:926.2px;">C30</span>
<div style="position:absolute;left:1168.7px;top:475px;width:15px;height:10px;box-sizing:border-box;border:1px solid #d8d8d8;background:linear-gradient(#fff 0,#fff 45%,#dc1e3c 45%,#dc1e3c 100%)"></div>
<span style="letter-spacing:-0.474px;position:absolute;top:477px;font-size:10px;line-height:10px;font-weight:400;color:#222;white-space:pre;left:1185.0px;">PN-EN 338:2016-06</span>
<div style="position:absolute;left:847px;top:496px;width:421px;height:1px;background:#a8a8a8;"></div>
<div style="position:absolute;left:1144px;top:504px;width:1px;height:253px;background:#d4d4d4;"></div>
<div style="position:absolute;left:1196px;top:504px;width:1px;height:253px;background:#d4d4d4;"></div>
<div style="position:absolute;left:1224px;top:504px;width:1px;height:253px;background:#d4d4d4;"></div>
<div style="position:absolute;left:1268px;top:504px;width:1px;height:253px;background:#d4d4d4;"></div>
<span style="letter-spacing:-0.346px;position:absolute;top:510.0px;font-size:10px;line-height:10px;font-weight:400;color:#3a3a3a;white-space:pre;left:850.3px;">Charakterystyczna wytrzymałość na zginanie</span>
<span style="position:absolute;top:510.0px;font-size:11px;line-height:11px;font-weight:400;color:#222;white-space:pre;right:89px;">f<span style="position:relative;top:2px;font-size:10px">m,k</span></span>
<span style="position:absolute;top:510.0px;font-size:10px;line-height:10px;font-weight:400;color:#222;white-space:pre;right:60px;letter-spacing:0.3px;">30</span>
<span style="position:absolute;top:510.0px;font-size:10px;line-height:10px;font-weight:400;color:#222;white-space:pre;left:1227.7px;">MPa</span>
<span style="letter-spacing:-0.348px;position:absolute;top:529.5px;font-size:10px;line-height:10px;font-weight:400;color:#3a3a3a;white-space:pre;left:850.3px;">Charakterystyczna wytrzymałość na rozciąganie wzdłuż włókien</span>
<span style="position:absolute;top:529.5px;font-size:11px;line-height:11px;font-weight:400;color:#222;white-space:pre;right:89px;">f<span style="position:relative;top:2px;font-size:10px">t,0,k</span></span>
<span style="position:absolute;top:529.5px;font-size:10px;line-height:10px;font-weight:400;color:#222;white-space:pre;right:60px;letter-spacing:0.3px;">19</span>
<span style="position:absolute;top:529.5px;font-size:10px;line-height:10px;font-weight:400;color:#222;white-space:pre;left:1227.7px;">MPa</span>
<span style="letter-spacing:-0.364px;position:absolute;top:549.0px;font-size:10px;line-height:10px;font-weight:400;color:#3a3a3a;white-space:pre;left:850.3px;">Charakterystyczna wytrzymałość na rozciąganie w poprzek włókien</span>
<span style="position:absolute;top:549.0px;font-size:11px;line-height:11px;font-weight:400;color:#222;white-space:pre;right:89px;">f<span style="position:relative;top:2px;font-size:10px">t,90,k</span></span>
<span style="position:absolute;top:549.0px;font-size:10px;line-height:10px;font-weight:400;color:#222;white-space:pre;right:60px;letter-spacing:0.3px;">0,4</span>
<span style="position:absolute;top:549.0px;font-size:10px;line-height:10px;font-weight:400;color:#222;white-space:pre;left:1227.7px;">MPa</span>
<span style="letter-spacing:-0.360px;position:absolute;top:568.5px;font-size:10px;line-height:10px;font-weight:400;color:#3a3a3a;white-space:pre;left:850.3px;">Charakterystyczna wytrzymałość na ściskanie wzdłuż włókien</span>
<span style="position:absolute;top:568.5px;font-size:11px;line-height:11px;font-weight:400;color:#222;white-space:pre;right:89px;">f<span style="position:relative;top:2px;font-size:10px">c,0,k</span></span>
<span style="position:absolute;top:568.5px;font-size:10px;line-height:10px;font-weight:400;color:#222;white-space:pre;right:60px;letter-spacing:0.3px;">24</span>
<span style="position:absolute;top:568.5px;font-size:10px;line-height:10px;font-weight:400;color:#222;white-space:pre;left:1227.7px;">MPa</span>
<span style="letter-spacing:-0.369px;position:absolute;top:588.0px;font-size:10px;line-height:10px;font-weight:400;color:#3a3a3a;white-space:pre;left:850.3px;">Charakterystyczna wytrzymałość na ściskanie w poprzek włókien</span>
<span style="position:absolute;top:588.0px;font-size:11px;line-height:11px;font-weight:400;color:#222;white-space:pre;right:89px;">f<span style="position:relative;top:2px;font-size:10px">c,90,k</span></span>
<span style="position:absolute;top:588.0px;font-size:10px;line-height:10px;font-weight:400;color:#222;white-space:pre;right:60px;letter-spacing:0.3px;">2,7</span>
<span style="position:absolute;top:588.0px;font-size:10px;line-height:10px;font-weight:400;color:#222;white-space:pre;left:1227.7px;">MPa</span>
<span style="letter-spacing:-0.342px;position:absolute;top:607.5px;font-size:10px;line-height:10px;font-weight:400;color:#3a3a3a;white-space:pre;left:850.3px;">Charakterystyczna wytrzymałość na ścinanie</span>
<span style="position:absolute;top:607.5px;font-size:11px;line-height:11px;font-weight:400;color:#222;white-space:pre;right:89px;">f<span style="position:relative;top:2px;font-size:10px">v,k</span></span>
<span style="position:absolute;top:607.5px;font-size:10px;line-height:10px;font-weight:400;color:#222;white-space:pre;right:60px;letter-spacing:0.3px;">4</span>
<span style="position:absolute;top:607.5px;font-size:10px;line-height:10px;font-weight:400;color:#222;white-space:pre;left:1227.7px;">MPa</span>
<span style="letter-spacing:-0.392px;position:absolute;top:627.0px;font-size:10px;line-height:10px;font-weight:400;color:#3a3a3a;white-space:pre;left:850.3px;">Średni moduł sprężystości wzdłuż włókien</span>
<span style="position:absolute;top:627.0px;font-size:11px;line-height:11px;font-weight:400;color:#222;white-space:pre;right:89px;">E<span style="position:relative;top:2px;font-size:10px">0,mean</span></span>
<span style="position:absolute;top:627.0px;font-size:10px;line-height:10px;font-weight:400;color:#222;white-space:pre;right:60px;letter-spacing:0.3px;">12</span>
<span style="position:absolute;top:627.0px;font-size:10px;line-height:10px;font-weight:400;color:#222;white-space:pre;left:1227.7px;">GPa</span>
<span style="letter-spacing:-0.329px;position:absolute;top:646.5px;font-size:10px;line-height:10px;font-weight:400;color:#3a3a3a;white-space:pre;left:850.3px;">5% kwantyl modułu sprężystości wzdłuż włókien</span>
<span style="position:absolute;top:646.5px;font-size:11px;line-height:11px;font-weight:400;color:#222;white-space:pre;right:89px;">E<span style="position:relative;top:2px;font-size:10px">0,05</span></span>
<span style="position:absolute;top:646.5px;font-size:10px;line-height:10px;font-weight:400;color:#222;white-space:pre;right:60px;letter-spacing:0.3px;">8</span>
<span style="position:absolute;top:646.5px;font-size:10px;line-height:10px;font-weight:400;color:#222;white-space:pre;left:1227.7px;">GPa</span>
<span style="letter-spacing:-0.405px;position:absolute;top:666.0px;font-size:10px;line-height:10px;font-weight:400;color:#3a3a3a;white-space:pre;left:850.3px;">Średni moduł sprężystości w poprzek włókien</span>
<span style="position:absolute;top:666.0px;font-size:11px;line-height:11px;font-weight:400;color:#222;white-space:pre;right:89px;">E<span style="position:relative;top:2px;font-size:10px">90,mean</span></span>
<span style="position:absolute;top:666.0px;font-size:10px;line-height:10px;font-weight:400;color:#222;white-space:pre;right:60px;letter-spacing:0.3px;">0,4</span>
<span style="position:absolute;top:666.0px;font-size:10px;line-height:10px;font-weight:400;color:#222;white-space:pre;left:1227.7px;">GPa</span>
<span style="letter-spacing:-0.421px;position:absolute;top:685.5px;font-size:10px;line-height:10px;font-weight:400;color:#3a3a3a;white-space:pre;left:850.3px;">Średni moduł odkształcenia postaciowego</span>
<span style="position:absolute;top:685.5px;font-size:11px;line-height:11px;font-weight:400;color:#222;white-space:pre;right:89px;">G<span style="position:relative;top:2px;font-size:10px">mean</span></span>
<span style="position:absolute;top:685.5px;font-size:10px;line-height:10px;font-weight:400;color:#222;white-space:pre;right:60px;letter-spacing:0.3px;">0,75</span>
<span style="position:absolute;top:685.5px;font-size:10px;line-height:10px;font-weight:400;color:#222;white-space:pre;left:1227.7px;">GPa</span>
<span style="letter-spacing:-0.302px;position:absolute;top:705.0px;font-size:10px;line-height:10px;font-weight:400;color:#3a3a3a;white-space:pre;left:850.3px;">Charakterystyczna gęstość</span>
<span style="position:absolute;top:705.0px;font-size:11px;line-height:11px;font-weight:400;color:#222;white-space:pre;right:89px;">ρ<span style="position:relative;top:2px;font-size:10px">k</span></span>
<span style="position:absolute;top:705.0px;font-size:10px;line-height:10px;font-weight:400;color:#222;white-space:pre;right:60px;letter-spacing:0.3px;">380</span>
<span style="position:absolute;top:705.0px;font-size:10px;line-height:10px;font-weight:400;color:#222;white-space:pre;left:1227.7px;">kg/m<span style="font-size:8px;position:relative;top:-3px">3</span></span>
<span style="letter-spacing:-0.381px;position:absolute;top:724.5px;font-size:10px;line-height:10px;font-weight:400;color:#3a3a3a;white-space:pre;left:850.3px;">Średnia gęstość</span>
<span style="position:absolute;top:724.5px;font-size:11px;line-height:11px;font-weight:400;color:#222;white-space:pre;right:89px;">ρ<span style="position:relative;top:2px;font-size:10px">mean</span></span>
<span style="position:absolute;top:724.5px;font-size:10px;line-height:10px;font-weight:400;color:#222;white-space:pre;right:60px;letter-spacing:0.3px;">460</span>
<span style="position:absolute;top:724.5px;font-size:10px;line-height:10px;font-weight:400;color:#222;white-space:pre;left:1227.7px;">kg/m<span style="font-size:8px;position:relative;top:-3px">3</span></span>
<span style="letter-spacing:-0.423px;position:absolute;top:744.0px;font-size:10px;line-height:10px;font-weight:400;color:#3a3a3a;white-space:pre;left:850.3px;">Współczynnik cieplnej rozszerzalności liniowej</span>
<span style="position:absolute;top:744.0px;font-size:11px;line-height:11px;font-weight:400;color:#222;white-space:pre;right:89px;">α<span style="position:relative;top:2px;font-size:10px">t</span></span>
<span style="position:absolute;top:744.0px;font-size:10px;line-height:10px;font-weight:400;color:#222;white-space:pre;right:60px;letter-spacing:0.3px;">5,0</span>
<span style="position:absolute;top:744.0px;font-size:10px;line-height:10px;font-weight:400;color:#222;white-space:pre;left:1227.7px;">10<span style="font-size:9px;position:relative;top:-4px">-6</span>/ºC</span>
<span style="letter-spacing:0.179px;position:absolute;top:774.7px;font-size:10px;line-height:10px;font-weight:700;color:#111;white-space:pre;left:848.2px;">Komentarz</span>
<div style="position:absolute;left:907px;top:780px;width:362px;height:1px;background:#a8a8a8;"></div>
<span style="letter-spacing:0.088px;position:absolute;top:790.5px;font-size:9px;line-height:9px;font-weight:400;color:#333;white-space:pre;left:848.0px;">1. Klasa wytrzymałości drewna określona na podstawie badania na zginanie próbek ustawionych</span>
<span style="letter-spacing:-0.474px;position:absolute;top:801.5px;font-size:9px;line-height:9px;font-weight:400;color:#333;white-space:pre;left:848.0px;">bokiem.</span>
<span style="letter-spacing:0.053px;position:absolute;top:812.6999999999999px;font-size:9px;line-height:9px;font-weight:400;color:#333;white-space:pre;left:848.0px;">2. Podane właściwości są określone dla wilgotności drewna odpowiadającej 20ºC i wilgotności</span>
<span style="letter-spacing:0.304px;position:absolute;top:823.1999999999999px;font-size:9px;line-height:9px;font-weight:400;color:#333;white-space:pre;left:848.0px;">powietrza 65%.</span>
<span style="letter-spacing:0.076px;position:absolute;top:834.3px;font-size:9px;line-height:9px;font-weight:400;color:#333;white-space:pre;left:848.0px;">3. Wartość wytrzymałości na ścinanie odnosi się do drewna bez spękań, wg EN 408.</span>
<svg style="position:absolute;left:1230px;top:818px" width="40" height="40" viewBox="1230 818 40 40"><defs><linearGradient id="mg3" x1="0" y1="0" x2="1" y2="1"><stop offset="0" stop-color="#d8ecf8"/><stop offset="0.5" stop-color="#ffffff"/></linearGradient></defs><circle cx="1247.5" cy="835" r="9.6" fill="url(#mg3)" stroke="#8a8a8a" stroke-width="2.6"/><path d="M1255 842.5 L1266.5 854" stroke="#5e5e5e" stroke-width="3.6"/></svg>
<div style="position:absolute;left:840px;top:860px;width:436px;height:1px;background:#c8c8c8;"></div>
<div style="position:absolute;left:840px;top:861px;width:436px;height:35px;background:#f0f0f0;"></div>
<div style="position:absolute;left:847px;top:869px;width:19px;height:19px;box-sizing:border-box;border:1px solid #c4c4c4;background:#e1e1e1;"></div>
<div style="position:absolute;left:870px;top:869px;width:19px;height:19px;box-sizing:border-box;border:1px solid #c4c4c4;background:#e1e1e1;"></div>
<svg style="position:absolute;left:847px;top:869px" width="42" height="19" viewBox="847 869 42 19"><path d="M858.5 875 L854.8 878.5 L858.5 882" fill="none" stroke="#000" stroke-width="1.9"/><path d="M877.3 875 L881 878.5 L877.3 882" fill="none" stroke="#000" stroke-width="1.9"/></svg>
<span style="letter-spacing:-0.026px;position:absolute;top:874px;font-size:10px;line-height:10px;font-weight:400;color:#a0a0a0;white-space:pre;left:894.0px;">8/206</span>
<div style="position:absolute;left:1204px;top:869px;width:64px;height:19px;box-sizing:border-box;border:1px solid #adadad;background:#e1e1e1;"></div>
<span style="letter-spacing:-0.577px;position:absolute;top:874.5px;font-size:10px;line-height:10px;font-weight:400;color:#111;white-space:pre;left:1229.0px;">OK</span></body></html>
